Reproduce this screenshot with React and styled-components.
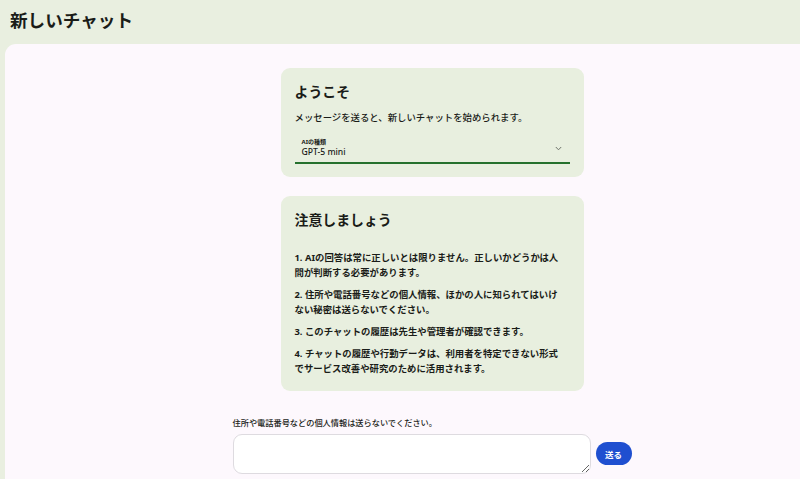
import React from "react";
import styled, { createGlobalStyle } from "styled-components";

const Global = createGlobalStyle`
  html, body { margin: 0; padding: 0; height: 100%; }
  body {
    background: #e9efe0;
    font-family: "Noto Sans", "Noto Sans CJK JP", sans-serif;
    color: #1a1c18;
    overflow: hidden;
  }
  #root { height: 100%; }
`;

const Page = styled.div`
  display: flex;
  flex-direction: column;
  height: 100%;
`;

const Header = styled.header`
  height: 44px;
  flex: none;
  display: flex;
  align-items: center;
  padding-left: 10px;
`;

const PageTitle = styled.h1`
  margin: 0;
  font-size: 17.6px;
  font-weight: 700;
  line-height: 1;
  position: relative;
  top: -1px;
`;

const Panel = styled.main`
  flex: 1;
  margin-left: 5px;
  background: #fdf8fd;
  border-top-left-radius: 11px;
  padding: 24px 0 0 59px;
  display: flex;
  justify-content: center;
`;

const Column = styled.div`
  width: 399px;
  display: flex;
  flex-direction: column;
  align-items: center;
`;

const Card = styled.section`
  width: 303px;
  box-sizing: border-box;
  background: #e8efdf;
  border-radius: 9px;
  padding: 14px 14px ${(p) => p.$pb || 14}px;
  margin-bottom: ${(p) => p.$mb || 0}px;
`;

const CardTitle = styled.h2`
  margin: 0;
  font-size: 13.9px;
  line-height: 20px;
  font-weight: 700;
`;

const Lead = styled.p`
  margin: 8px 0 0;
  font-size: 9.4px;
  line-height: 15px;
  font-weight: 500;
`;

const Select = styled.div`
  margin-top: 12.5px;
  padding-bottom: 3px;
  border-bottom: 2px solid #25712d;
  position: relative;
`;

const SelectLabel = styled.div`
  font-size: 6px;
  line-height: 8px;
  font-weight: 700;
  padding-left: 7px;
`;

const SelectValue = styled.div`
  font-size: 8.6px;
  line-height: 13px;
  font-weight: 500;
  padding-left: 7px;
`;

const Chevron = styled.svg`
  position: absolute;
  right: 8px;
  top: 8px;
  width: 7px;
  height: 5px;
`;

const List = styled.ol`
  list-style: none;
  margin: 19.5px 0 0;
  padding: 0;
  max-width: 271px;
`;

const Item = styled.li`
  font-size: 9.4px;
  line-height: 15px;
  font-weight: 700;
  & + & { margin-top: 7.3px; }
`;

const Notice = styled.p`
  align-self: stretch;
  margin: 26px 0 0;
  font-size: 8.2px;
  line-height: 12px;
  font-weight: 500;
`;

const InputRow = styled.div`
  align-self: stretch;
  margin-top: 5px;
  display: flex;
  align-items: center;
  gap: 5px;
`;

const TextArea = styled.textarea`
  width: 358px;
  height: 40px;
  box-sizing: border-box;
  border: 1px solid #dedbe0;
  border-radius: 9px;
  background: #fff;
  padding: 6px 8px;
  font-family: inherit;
  font-size: 9px;
  outline: none;
`;

const SendButton = styled.button`
  width: 36px;
  height: 23px;
  border: none;
  border-radius: 12px;
  background: #1f4fd0;
  color: #fff;
  font-family: inherit;
  font-size: 8.5px;
  font-weight: 700;
  padding: 0;
  cursor: pointer;
`;

const items = [
  "1. AIの回答は常に正しいとは限りません。正しいかどうかは人間が判断する必要があります。",
  "2. 住所や電話番号などの個人情報、ほかの人に知られてはいけない秘密は送らないでください。",
  "3. このチャットの履歴は先生や管理者が確認できます。",
  "4. チャットの履歴や行動データは、利用者を特定できない形式でサービス改善や研究のために活用されます。",
];

export default function App() {
  return (
    <Page>
      <Global />
      <Header>
        <PageTitle>新しいチャット</PageTitle>
      </Header>
      <Panel>
        <Column>
          <Card $mb={19} $pb={13.5}>
            <CardTitle>ようこそ</CardTitle>
            <Lead>メッセージを送ると、新しいチャットを始められます。</Lead>
            <Select>
              <SelectLabel>AIの種類</SelectLabel>
              <SelectValue>GPT-5 mini</SelectValue>
              <Chevron viewBox="0 0 7 5">
                <path d="M0.8 1 L3.5 3.8 L6.2 1" fill="none" stroke="#6f746b" strokeWidth="1" />
              </Chevron>
            </Select>
          </Card>
          <Card $pb={14.5}>
            <CardTitle>注意しましょう</CardTitle>
            <List>
              {items.map((t) => (
                <Item key={t}>{t}</Item>
              ))}
            </List>
          </Card>
          <Notice>住所や電話番号などの個人情報は送らないでください。</Notice>
          <InputRow>
            <TextArea />
            <SendButton>送る</SendButton>
          </InputRow>
        </Column>
      </Panel>
    </Page>
  );
}
